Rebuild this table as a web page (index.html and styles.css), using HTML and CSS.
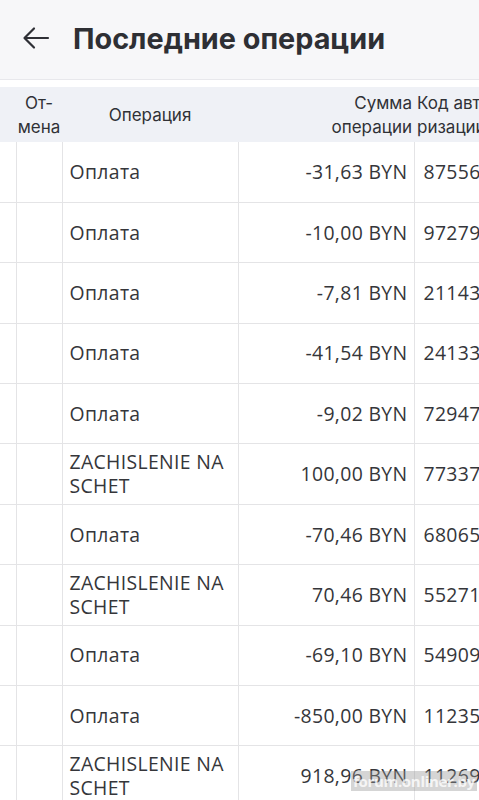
FILE: index.html
```html
<!DOCTYPE html>
<html lang="ru">
<head>
<meta charset="utf-8">
<title>Последние операции</title>
<link rel="stylesheet" href="styles.css">
</head>
<body>
<header class="topbar">
  <svg class="back" width="28" height="24" viewBox="0 0 28 24" aria-hidden="true">
    <path d="M26 12H3M12 2.5L2.5 12L12 21.5" fill="none" stroke="#2f3036" stroke-width="2.2" stroke-linecap="round" stroke-linejoin="round"/>
  </svg>
  <h1 class="title">Последние операции</h1>
</header>
<div class="gap"></div>
<div class="tablewrap">
  <table class="ops">
    <colgroup>
      <col class="c0"><col class="c1"><col class="c2"><col class="c3"><col class="c4">
    </colgroup>
    <thead>
      <tr>
        <th></th>
        <th class="h-center">От-<br>мена</th>
        <th class="h-center">Операция</th>
        <th class="h-right">Сумма<br>операции</th>
        <th class="h-left">Код авто-<br>ризации</th>
      </tr>
    </thead>
    <tbody>
      <tr><td></td><td></td><td>Оплата</td><td class="amt">-31,63 BYN</td><td class="code">875561</td></tr>
      <tr><td></td><td></td><td>Оплата</td><td class="amt">-10,00 BYN</td><td class="code">972790</td></tr>
      <tr><td></td><td></td><td>Оплата</td><td class="amt">-7,81 BYN</td><td class="code">211434</td></tr>
      <tr><td></td><td></td><td>Оплата</td><td class="amt">-41,54 BYN</td><td class="code">241335</td></tr>
      <tr><td></td><td></td><td>Оплата</td><td class="amt">-9,02 BYN</td><td class="code">729475</td></tr>
      <tr><td></td><td></td><td>ZACHISLENIE NA SCHET</td><td class="amt">100,00 BYN</td><td class="code">773371</td></tr>
      <tr><td></td><td></td><td>Оплата</td><td class="amt">-70,46 BYN</td><td class="code">680655</td></tr>
      <tr><td></td><td></td><td>ZACHISLENIE NA SCHET</td><td class="amt">70,46 BYN</td><td class="code">552713</td></tr>
      <tr><td></td><td></td><td>Оплата</td><td class="amt">-69,10 BYN</td><td class="code">549091</td></tr>
      <tr><td></td><td></td><td>Оплата</td><td class="amt">-850,00 BYN</td><td class="code">112350</td></tr>
      <tr><td></td><td></td><td>ZACHISLENIE NA SCHET</td><td class="amt">918,96 BYN</td><td class="code">112691</td></tr>
    </tbody>
  </table>
</div>
<div class="watermark">forum.onliner.by</div>
</body>
</html>
```
FILE: styles.css
```css
html, body {
  margin: 0;
  padding: 0;
  background: #ffffff;
  overflow: hidden;
}
body {
  width: 479px;
  height: 800px;
  position: relative;
  font-family: "Open Sans", "Liberation Sans", sans-serif;
  color: #303136;
}
.topbar {
  background: #f7f7f9;
  border-bottom: 1px solid #e8e8ec;
  display: flex;
  align-items: center;
  padding-left: 22px;
  box-sizing: border-box;
  height: 80px;
}
.back {
  flex: none;
  margin-top: -3px;
}
.title {
  margin: -3px 0 0 23px;
  font-family: Inter, "Liberation Sans", sans-serif;
  font-weight: 700;
  font-size: 28.8px;
  color: #2e2f34;
}
.gap {
  height: 7px;
}
.tablewrap {
  width: 479px;
  overflow: hidden;
}
.ops {
  border-collapse: collapse;
  table-layout: fixed;
  width: 560px;
}
.c0 { width: 16px; }
.c1 { width: 46px; }
.c2 { width: 176px; }
.c3 { width: 176px; }
.c4 { width: 146px; }
.ops thead th {
  background: #eff1f6;
  height: 55px;
  padding: 0;
  font-family: Inter, "Liberation Sans", sans-serif;
  font-weight: 400;
  font-size: 17px;
  line-height: 24px;
  color: #303136;
  vertical-align: middle;
  white-space: nowrap;
  overflow: hidden;
}
.h-center { text-align: center; }
.h-right { text-align: right; padding-right: 2px !important; }
.h-left { text-align: left; padding-left: 3px !important; }
.ops tbody td {
  height: 60.4px;
  box-sizing: border-box;
  border: 1px solid #e4e4e6;
  border-top: none;
  padding: 0 7px;
  font-size: 19.4px;
  letter-spacing: 0.35px;
  line-height: 24px;
  color: #35363a;
  vertical-align: middle;
  overflow: hidden;
  white-space: normal;
}
.ops tbody td:first-child { border-left: none; }
.ops tbody td.amt {
  text-align: right;
  padding-right: 6px;
  white-space: nowrap;
}
.ops tbody td.code {
  padding-left: 9px;
  white-space: nowrap;
}
.watermark {
  position: absolute;
  right: 2px;
  bottom: 9px;
  padding: 0 2px;
  font-family: "Open Sans", sans-serif;
  font-weight: 700;
  font-size: 15px;
  line-height: 20px;
  color: rgba(255, 255, 255, 0.8);
  background: rgba(150, 150, 150, 0.4);
  letter-spacing: -0.3px;
}
```
